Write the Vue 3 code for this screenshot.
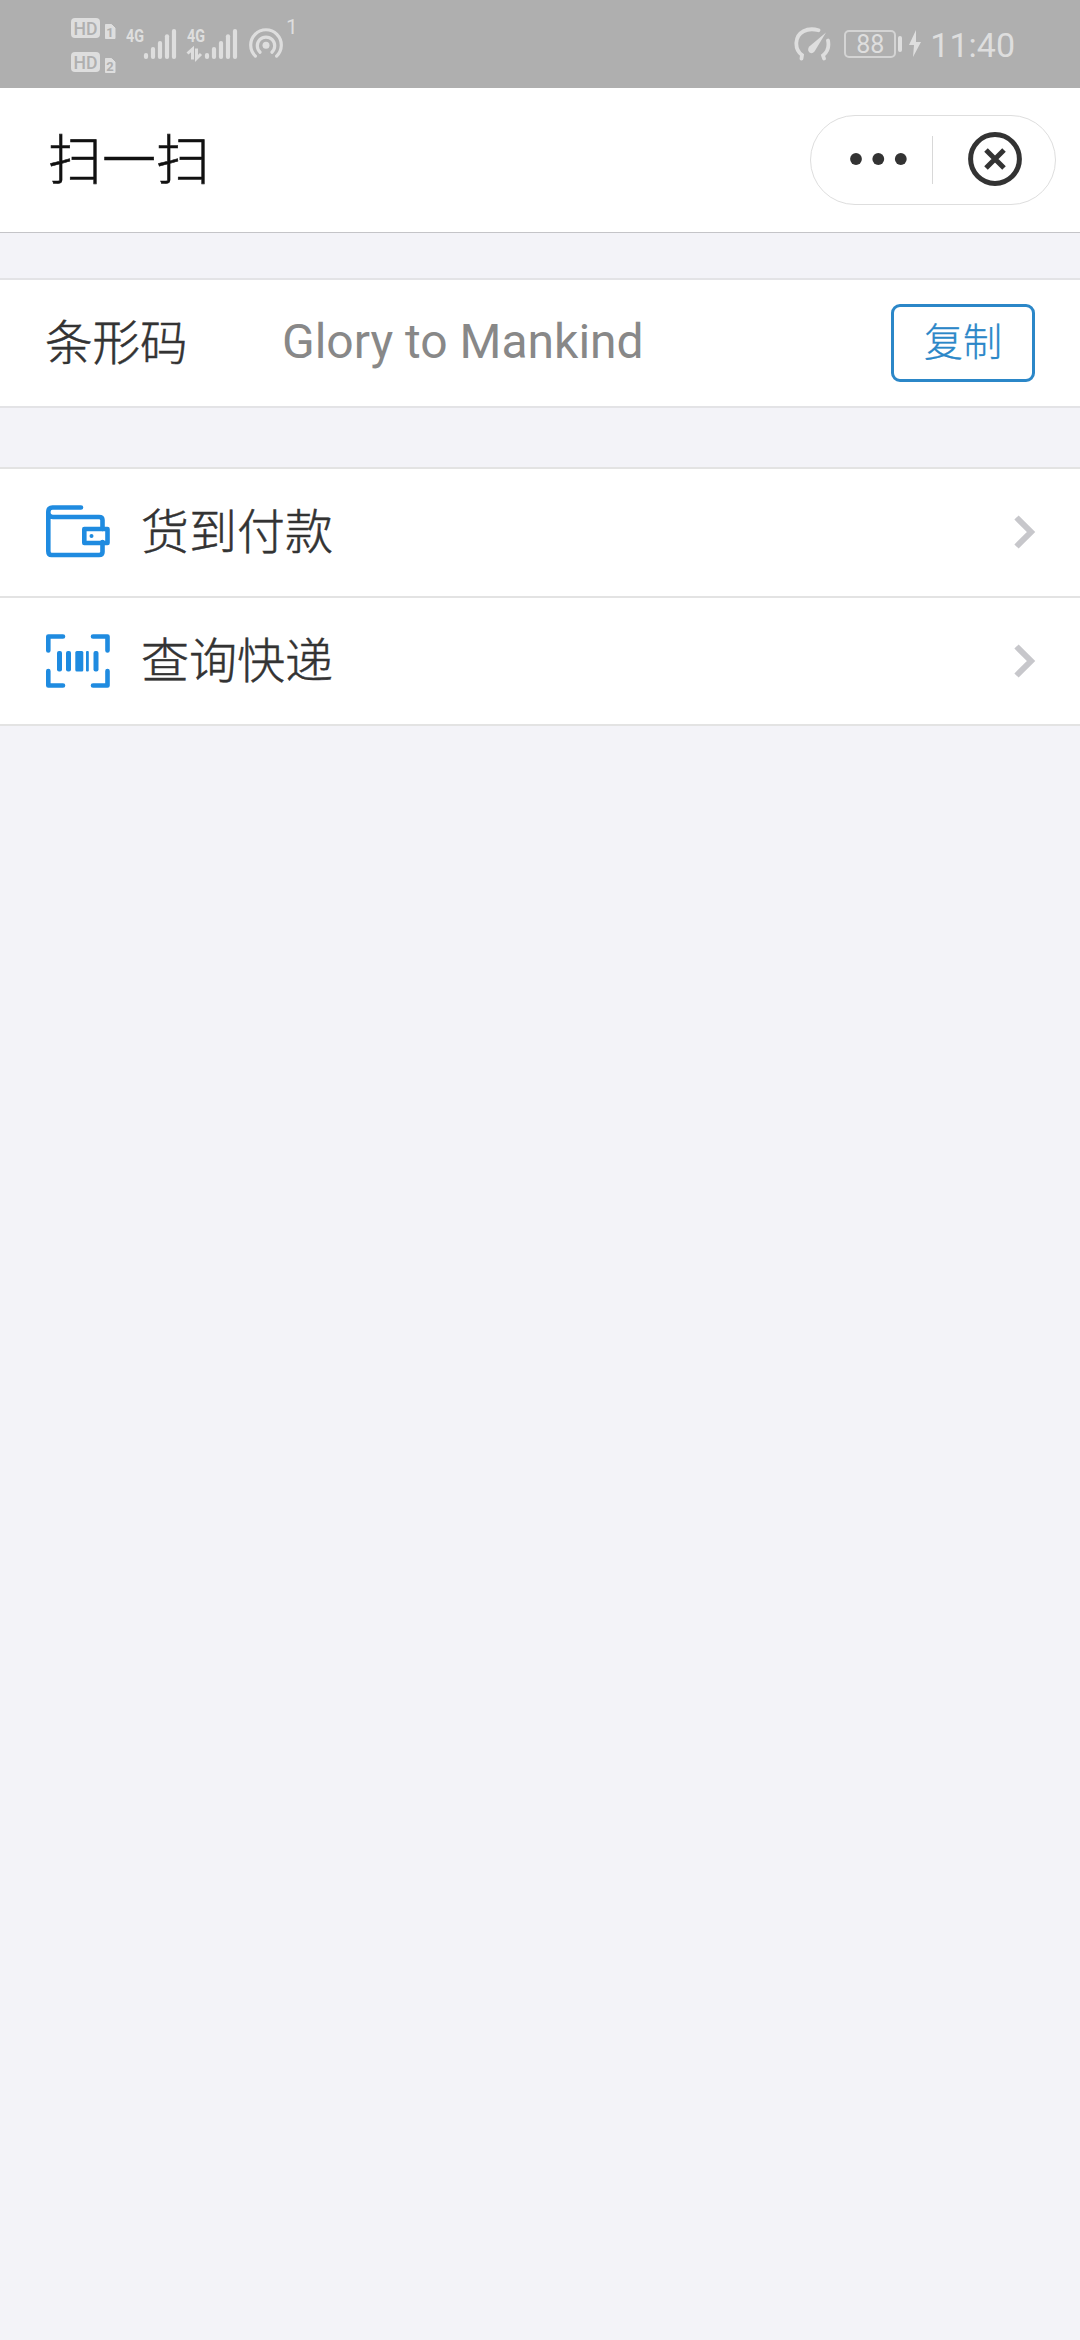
<script setup>
const actions = [
  { id: 'cod', label: '货到付款' },
  { id: 'express', label: '查询快递' },
]
const networks = [
  { id: 1, data: false },
  { id: 2, data: true },
]
const bars = [
  { x: 19, y: 39 },
  { x: 26, y: 33 },
  { x: 33, y: 27 },
  { x: 40, y: 20.3 },
  { x: 47, y: 15 },
]
</script>

<template>
  <div class="screen">
    <div class="status">
      <div class="status-left">
        <div class="sims">
          <svg v-for="n in 2" :key="n" width="46" height="22" viewBox="0 0 46 22">
            <rect x="1" y="1" width="29" height="20" rx="4" fill="#dedede" />
            <text x="15.5" y="17.5" text-anchor="middle" textLength="24" lengthAdjust="spacingAndGlyphs" class="hd">HD</text>
            <path d="M35.500 7.500h6l3.500 3.500v10.500h-9.500z" fill="#dedede" stroke="#dedede" stroke-linejoin="round" />
            <text x="40" y="19.5" text-anchor="middle" class="sim">{{ n }}</text>
          </svg>
        </div>
        <svg v-for="n in networks" :key="n.id" class="signal" :class="{ second: n.data }" width="54" height="60" viewBox="0 0 54 60">
          <text x="1" y="28.3" textLength="18" lengthAdjust="spacingAndGlyphs" class="net">4G</text>
          <path v-for="b in bars" :key="b.x" :d="`M${b.x + 2} ${b.y + 2}V43`" class="bar" />
          <path v-if="n.data" d="M1.500 39.500L6.500 35V45.500M10.500 34.500V44.500L15 40" class="arrows" />
        </svg>
        <svg class="hotspot" width="36" height="34" viewBox="0 0 36 34">
          <g class="arc">
            <path d="M7.4 28.1A15.3 15.3 0 1 1 28.6 28.1" />
            <path d="M12.1 24.2A8.7 8.7 0 1 1 23.9 24.2" />
          </g>
          <circle cx="18" cy="17.3" r="3.5" fill="#dedede" />
        </svg>
        <span class="count">1</span>
      </div>
      <div class="status-right">
        <svg width="40" height="34" viewBox="0 0 40 34">
          <path d="M8.5 31.5L9 28C1 22 1.500 9 10.500 4.200Q17 .8 25.500 3.300M35 13.500Q37 23 30 28.500L31 31.500" class="gauge" />
          <path d="M33 5.500L21.500 24.500Q19 27.500 16.500 25.500T16 19.800Z" fill="#dedede" />
        </svg>
        <div class="battery">88</div>
        <span class="nub"></span>
        <svg class="bolt" width="14" height="28" viewBox="0 0 14 28">
          <path d="M8 0L1 15h5L5 27l8-15H8z" fill="#dedede" />
        </svg>
        <span class="time">11:40</span>
      </div>
    </div>

    <header class="header">
      <h1>扫一扫</h1>
      <div class="capsule">
        <svg class="dots" width="60" height="14" viewBox="0 0 60 14">
          <circle cx="8" cy="7" r="5.900" />
          <circle cx="30.300" cy="7" r="5.900" />
          <circle cx="52.800" cy="7" r="5.900" />
        </svg>
        <span class="divider"></span>
        <svg class="close" width="54" height="54" viewBox="0 0 54 54">
          <circle cx="27" cy="27" r="24.400" />
          <path d="M18 18l18 18M36 18l-18 18" />
        </svg>
      </div>
    </header>

    <section class="code-row">
      <span class="label">条形码</span>
      <span class="value">Glory to Mankind</span>
      <button class="copy">复制</button>
    </section>

    <section class="list">
      <div v-for="a in actions" :key="a.id" class="item">
        <svg class="icon" width="66" height="56" viewBox="0 0 66 56">
          <g v-if="a.id === 'cod'" class="line">
            <path d="M36 3.500H7.500Q3.300 3.500 3.300 8V47Q3.300 51 6.500 51H54Q57.500 51 57.500 48V38M3.300 8Q3.300 13 8 13H54Q57.500 13 57.500 16V25" />
            <rect x="39.300" y="25" width="23.200" height="14" />
            <circle cx="46.500" cy="32" r="2" class="solid" />
          </g>
          <g v-else class="line">
            <path d="M18 3.500H3.300V17.500M48 3.500H62.500V17.500M3.300 38V52.500H18M62.500 38V52.500H48" />
            <g class="solid">
              <rect x="12" y="18" width="5" height="20.500" rx="2" />
              <rect x="21" y="18" width="5" height="20.500" rx="2" />
              <rect x="30.300" y="18" width="8" height="20.500" rx="1.500" />
              <rect x="41" y="18" width="2.800" height="20.500" rx="1" />
              <rect x="48.500" y="18" width="5" height="20.500" rx="2" />
            </g>
          </g>
        </svg>
        <span class="name">{{ a.label }}</span>
        <svg class="chevron" width="22" height="36" viewBox="0 0 22 36">
          <path d="M2.500 3.500L17 18L2.500 32.500" />
        </svg>
      </div>
    </section>
  </div>
</template>

<style>
body {
  background: #f3f3f8;
}
</style>

<style scoped>
.screen {
  width: 1080px;
  height: 2340px;
  background: #f3f3f8;
  font-family: Roboto, "Noto Sans CJK SC", sans-serif;
  color: #333;
  overflow: hidden;
}
.screen * {
  box-sizing: border-box;
}
svg {
  display: block;
  flex: none;
}
.status {
  height: 88px;
  background: #afafaf;
  color: #dedede;
  display: flex;
  justify-content: space-between;
  padding: 0 65px 0 70px;
}
.status-left {
  display: flex;
}
.sims {
  display: flex;
  flex-direction: column;
  gap: 12px;
  padding-top: 17px;
}
.hd {
  font: 500 19px Roboto, sans-serif;
  fill: #afafaf;
}
.sim {
  font: 700 13px Roboto, sans-serif;
  fill: #afafaf;
}
.signal {
  margin: 14px 0 0 9px;
}
.signal.second {
  margin-left: 7px;
}
.net {
  font: 700 18.5px Roboto, sans-serif;
  fill: #dedede;
}
.bar {
  stroke: #dedede;
  stroke-width: 4.2;
  stroke-linecap: round;
}
.arrows {
  fill: none;
  stroke: #dedede;
  stroke-width: 3;
}
.hotspot {
  margin: 28px 0 0 8px;
}
.arc {
  fill: none;
  stroke: #dedede;
  stroke-width: 3.2;
  stroke-linecap: round;
}
.count {
  font-size: 21px;
  line-height: 20px;
  margin: 17px 0 0 2px;
}
.status-right {
  display: flex;
  align-items: center;
}
.gauge {
  fill: none;
  stroke: #dedede;
  stroke-width: 3.8;
  stroke-linecap: round;
}
.battery {
  width: 52px;
  height: 28px;
  margin-left: 11px;
  border: 2px solid #d4d4d4;
  border-radius: 5px;
  font-size: 25px;
  line-height: 25px;
  text-align: center;
}
.nub {
  width: 4px;
  height: 16px;
  margin-left: 2px;
  border-radius: 2px;
  background: #dedede;
}
.bolt {
  margin-left: 6px;
}
.time {
  font-size: 34px;
  line-height: 40px;
  margin: 1px 0 0 8px;
}
.header {
  height: 145px;
  background: #fff;
  border-bottom: 1px solid #c4c4c8;
  display: flex;
  justify-content: space-between;
  align-items: center;
  padding: 0 24px 0 48px;
}
h1 {
  margin: 0;
  padding-top: 3px;
  font-size: 54px;
  line-height: 80px;
  font-weight: 300;
  color: #111;
  -webkit-text-stroke: 0.6px #111;
}
.capsule {
  width: 246px;
  height: 90px;
  border: 1px solid #dedede;
  border-radius: 45px;
  display: flex;
  align-items: center;
}
.dots {
  margin: -2px 0 0 37px;
  fill: #333;
}
.divider {
  width: 1px;
  height: 48px;
  margin-left: 24px;
  background: #d8d8d8;
}
.close {
  margin: -3px 0 0 35px;
  fill: none;
  stroke: #333;
  stroke-width: 5;
}
.code-row {
  height: 130px;
  margin-top: 45px;
  background: #fff;
  border-top: 2px solid #e3e3e6;
  border-bottom: 2px solid #e3e3e6;
  display: flex;
  align-items: center;
  padding: 0 45px;
}
.label {
  width: 237px;
  padding-top: 2px;
  font-size: 47.5px;
  line-height: 70px;
  font-weight: 300;
  -webkit-text-stroke: 0.5px #333;
}
.value {
  flex: 1;
  padding-bottom: 2px;
  font-size: 48px;
  line-height: 60px;
  color: #888;
}
.copy {
  width: 144px;
  height: 78px;
  padding: 0;
  border: 3px solid #2b87c8;
  border-radius: 9px;
  background: #fff;
  color: #2b87c8;
  font: 300 39px/60px Roboto, "Noto Sans CJK SC", sans-serif;
  -webkit-text-stroke: 0.3px #2b87c8;
}
.list {
  margin-top: 59px;
  border-top: 2px solid #e3e3e3;
}
.item {
  height: 128.5px;
  background: #fff;
  border-bottom: 2px solid #e3e3e3;
  display: flex;
  align-items: center;
  padding: 0 44px 0 45px;
}
.line {
  fill: none;
  stroke: #1f8be0;
  stroke-width: 4.6;
  stroke-linecap: round;
  stroke-linejoin: round;
}
.solid {
  fill: #1f8be0;
  stroke: none;
}
.name {
  flex: 1;
  margin-left: 30px;
  padding-top: 2px;
  font-size: 48px;
  line-height: 70px;
  font-weight: 300;
  -webkit-text-stroke: 0.5px #333;
}
.chevron {
  fill: none;
  stroke: #c7c7cb;
  stroke-width: 6;
}
</style>
